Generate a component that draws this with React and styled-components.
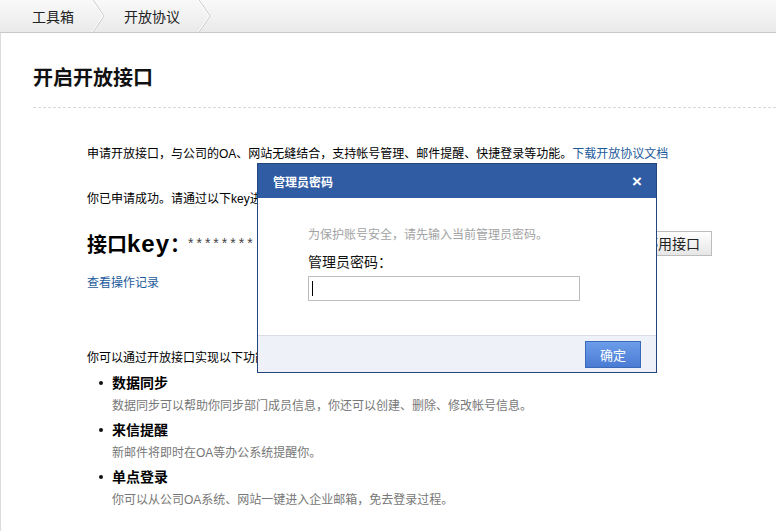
import styled, { createGlobalStyle } from 'styled-components'

const GlobalStyle = createGlobalStyle`
    html, body {
        margin: 0;
        padding: 0;
        background: #fff;
    }
    body {
        font-family: "Liberation Sans", "Noto Sans CJK SC", sans-serif;
        font-size: 12px;
        color: #000;
    }
`

function Chevron() {
    return (
        <ChevronSvg width="14" height="32" viewBox="0 0 14 32">
            <polyline points="1,0 12,16 1,32" fill="none" stroke="#c6c6c6" strokeWidth="1" />
            <polyline points="0,0 11,16 0,32" fill="none" stroke="#ffffff" strokeWidth="1" />
        </ChevronSvg>
    )
}

const features = [
    { title: '数据同步', desc: '数据同步可以帮助你同步部门成员信息，你还可以创建、删除、修改帐号信息。' },
    { title: '来信提醒', desc: '新邮件将即时在OA等办公系统提醒你。' },
    { title: '单点登录', desc: '你可以从公司OA系统、网站一键进入企业邮箱，免去登录过程。' },
]

export default function App() {
    return (
        <>
            <GlobalStyle />
            <Page>
                <TopBar>
                    <Crumb first>工具箱</Crumb>
                    <Chevron />
                    <Crumb>开放协议</Crumb>
                    <Chevron />
                </TopBar>

                <Main>
                    <Title>开启开放接口</Title>

                    <Content>
                        <Line>
                            申请开放接口，与公司的OA、网站无缝结合，支持帐号管理、邮件提醒、快捷登录等功能。
                            <A href="#">下载开放协议文档</A>
                        </Line>
                        <Line gap={25}>你已申请成功。请通过以下key进行接口调用，请妥善保管好你的key。</Line>

                        <KeyRow>
                            <KeyLabel>接口<KeyWord>key</KeyWord>：</KeyLabel>
                            <Stars>********</Stars>
                            <GrayButton>停用接口</GrayButton>
                        </KeyRow>

                        <Line gap={16}><A href="#">查看操作记录</A></Line>

                        <Line gap={55}>你可以通过开放接口实现以下功能：</Line>
                        <List>
                            {features.map(f => (
                                <Item key={f.title}>
                                    <ItemTitle>{f.title}</ItemTitle>
                                    <ItemDesc>{f.desc}</ItemDesc>
                                </Item>
                            ))}
                        </List>
                    </Content>
                </Main>

                <Dialog>
                    <DialogHead>
                        <DialogTitle>管理员密码</DialogTitle>
                        <Close>×</Close>
                    </DialogHead>
                    <DialogBody>
                        <Tip>为保护账号安全，请先输入当前管理员密码。</Tip>
                        <Label>管理员密码：</Label>
                        <FakeInput><Caret /></FakeInput>
                    </DialogBody>
                    <DialogFoot>
                        <BlueButton>确定</BlueButton>
                    </DialogFoot>
                </Dialog>
            </Page>
        </>
    )
}

const Page = styled.div`
    position: relative;
    width: 776px;
    height: 531px;
    overflow: hidden;
`
const TopBar = styled.div`
    display: flex;
    align-items: stretch;
    height: 32px;
    background: linear-gradient(to bottom, #f9f9f9, #eaeaea);
    border-bottom: 1px solid #c9c9c9;
`
const Crumb = styled.div`
    display: flex;
    align-items: center;
    padding: 0 18px;
    margin-left: ${p => (p.first ? '14px' : '0')};
    font-size: 14px;
    color: #222;
`
const ChevronSvg = styled.svg`
    display: block;
    flex: none;
`
const Main = styled.div`
    border-left: 1px solid #dcdcdc;
    padding-left: 32px;
    height: 498px;
`
const Title = styled.h2`
    margin: 0;
    padding: 31px 0 15px;
    font-size: 20px;
    line-height: 28px;
    font-weight: bold;
    color: #111;
    border-bottom: 1px dashed #d8d8d8;
`
const Content = styled.div`
    padding: 36px 0 0 54px;
`
const Line = styled.div`
    line-height: 20px;
    font-size: 12px;
    margin-top: ${p => (p.gap ? p.gap + 'px' : '0')};
    white-space: nowrap;
`
const A = styled.a`
    color: #1d5b9b;
    text-decoration: none;
`
const KeyRow = styled.div`
    display: flex;
    align-items: center;
    width: 625px;
    height: 28px;
    margin-top: 20px;
`
const KeyLabel = styled.span`
    font-size: 20px;
    font-weight: bold;
    color: #000;
    width: 101px;
    white-space: nowrap;
`
const KeyWord = styled.span`
    font-size: 24px;
    letter-spacing: 1px;
`
const Stars = styled.span`
    font-size: 14px;
    color: #444;
    letter-spacing: 3px;
    white-space: nowrap;
`
const GrayButton = styled.button`
    flex: none;
    margin-left: auto;
    height: 25px;
    padding: 0 11px;
    font-family: inherit;
    font-size: 14px;
    color: #222;
    border: 1px solid #bcbcbc;
    background: linear-gradient(to bottom, #ffffff, #e6e6e6);
`
const List = styled.div`
    margin-top: 3px;
`
const Item = styled.div`
    padding-left: 25px;
`
const ItemTitle = styled.div`
    position: relative;
    font-size: 14px;
    line-height: 24px;
    font-weight: bold;
    color: #000;
    &::before {
        content: '';
        position: absolute;
        left: -13px;
        top: 10px;
        width: 4px;
        height: 4px;
        border-radius: 50%;
        background: #111;
    }
`
const ItemDesc = styled.div`
    font-size: 12px;
    line-height: 23px;
    color: #777;
`
const Dialog = styled.div`
    position: absolute;
    left: 257px;
    top: 163px;
    width: 398px;
    height: 208px;
    border: 1px solid #24467e;
    background: #fff;
    display: flex;
    flex-direction: column;
`
const DialogHead = styled.div`
    display: flex;
    align-items: center;
    justify-content: space-between;
    height: 34px;
    padding: 0 14px 0 15px;
    background: #2f5ca3;
    color: #fff;
`
const DialogTitle = styled.span`
    font-size: 12px;
    font-weight: bold;
`
const Close = styled.span`
    font-size: 17px;
    font-weight: bold;
    line-height: 1;
`
const DialogBody = styled.div`
    flex: 1;
    padding: 27px 0 0 50px;
`
const Tip = styled.div`
    font-size: 12px;
    line-height: 20px;
    color: #a3a3a3;
`
const Label = styled.div`
    font-size: 14px;
    line-height: 22px;
    margin-top: 6px;
    color: #111;
`
const FakeInput = styled.div`
    display: flex;
    align-items: center;
    width: 267px;
    height: 23px;
    margin-top: 3px;
    padding-left: 3px;
    border: 1px solid #bdbdbd;
    background: #fff;
`
const Caret = styled.span`
    width: 1px;
    height: 15px;
    background: #000;
`
const DialogFoot = styled.div`
    display: flex;
    align-items: center;
    justify-content: flex-end;
    height: 36px;
    padding-right: 15px;
    border-top: 1px solid #d9dee6;
    background: #eef2f8;
`
const BlueButton = styled.button`
    width: 56px;
    height: 27px;
    font-family: inherit;
    font-size: 13px;
    color: #fff;
    border: 1px solid #3c68b8;
    background: linear-gradient(to bottom, #6c9de9, #4a7bd3);
`
